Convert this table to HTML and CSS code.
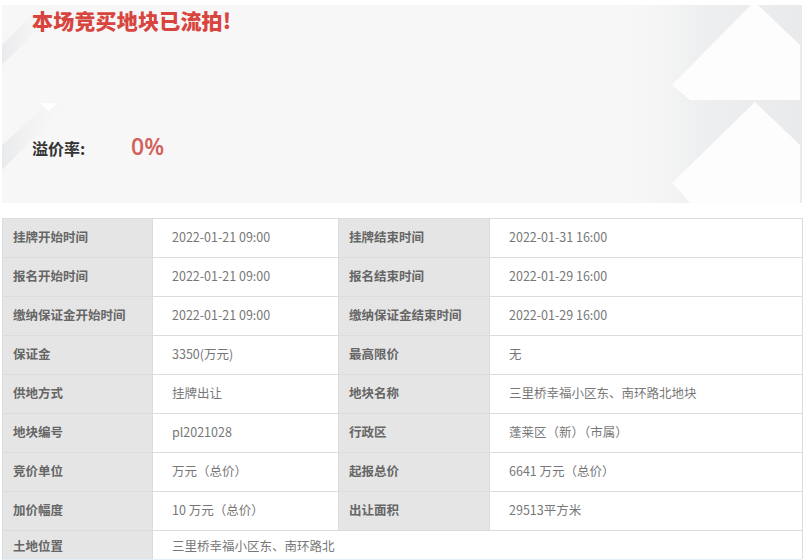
FILE: index.html
```html
<!DOCTYPE html>
<html lang="zh-CN">
<head>
<meta charset="utf-8">
<link rel="stylesheet" href="styles.css">
</head>
<body>
<div class="page">
  <section class="banner">
    <svg class="banner-bg" width="800" height="198" viewBox="0 0 800 198" aria-hidden="true">
      <defs>
        <linearGradient id="shade" x1="0" y1="0" x2="1" y2="0">
          <stop offset="0" stop-color="#f7f7f8" stop-opacity="0"/>
          <stop offset="0.45" stop-color="#eeeff0"/>
          <stop offset="1" stop-color="#e9eaec"/>
        </linearGradient>
        <linearGradient id="lshade" x1="0" y1="0" x2="1" y2="0">
          <stop offset="0" stop-color="#e9eaeb"/>
          <stop offset="1" stop-color="#f7f7f8" stop-opacity="0"/>
        </linearGradient>
      </defs>
      <rect x="610" y="0" width="190" height="198" fill="url(#shade)"/>
      <polygon points="0,40 40,0 60,0 0,60" fill="url(#lshade)"/>
      <polygon points="0,140 50,95 70,95 0,165" fill="url(#lshade)"/>
      <polygon points="38,98 56,98 47,106" fill="#ffffff"/>
      <polygon points="749,0 756,0 798,40 798,95 688,95 670,80" fill="#fdfdfd"/>
      <polygon points="753,97 798,140 798,198 688,198 670,178" fill="#fdfdfd"/>
    </svg>
    <h1 class="title">本场竞买地块已流拍!</h1>
    <div class="rate">
      <span class="rate-label">溢价率:</span>
      <span class="rate-value">0%</span>
    </div>
  </section>

  <table class="info">
    <colgroup>
      <col class="c1"><col class="c2"><col class="c3"><col class="c4">
    </colgroup>
    <tr><th>挂牌开始时间</th><td>2022-01-21 09:00</td><th>挂牌结束时间</th><td>2022-01-31 16:00</td></tr>
    <tr><th>报名开始时间</th><td>2022-01-21 09:00</td><th>报名结束时间</th><td>2022-01-29 16:00</td></tr>
    <tr><th>缴纳保证金开始时间</th><td>2022-01-21 09:00</td><th>缴纳保证金结束时间</th><td>2022-01-29 16:00</td></tr>
    <tr><th>保证金</th><td>3350(万元)</td><th>最高限价</th><td>无</td></tr>
    <tr><th>供地方式</th><td>挂牌出让</td><th>地块名称</th><td>三里桥幸福小区东、南环路北地块</td></tr>
    <tr><th>地块编号</th><td>pl2021028</td><th>行政区</th><td>蓬莱区（新）（市属）</td></tr>
    <tr><th>竞价单位</th><td>万元（总价）</td><th>起报总价</th><td>6641 万元（总价）</td></tr>
    <tr><th>加价幅度</th><td>10 万元（总价）</td><th>出让面积</th><td>29513平方米</td></tr>
    <tr><th>土地位置</th><td colspan="3">三里桥幸福小区东、南环路北</td></tr>
  </table>
  <div class="next-bar"></div>
</div>
</body>
</html>
```

FILE: styles.css
```css
* { box-sizing: border-box; }
html, body { margin: 0; padding: 0; background: #ffffff; }
body {
  font-family: "Noto Sans CJK SC", "Microsoft YaHei", "Noto Sans", sans-serif;
  overflow: hidden;
}
.page {
  padding: 5px 0 0 2px;
  width: 811px;
}
.banner {
  position: relative;
  width: 800px;
  height: 198px;
  background: #f7f7f8;
  overflow: hidden;
}
.banner-bg {
  position: absolute;
  left: 0;
  top: 0;
}
.title {
  position: relative;
  margin: 0;
  padding: 1px 0 0 30px;
  font-size: 21px;
  line-height: 28px;
  font-weight: 900;
  color: #d8443e;
  letter-spacing: 0.2px;
}
.rate {
  position: relative;
  display: flex;
  align-items: baseline;
  padding: 96px 0 0 30px;
}
.rate-label {
  width: 99px;
  font-size: 16px;
  font-weight: 700;
  color: #333333;
}
.rate-value {
  font-family: "Open Sans", "Noto Sans", sans-serif;
  font-size: 23px;
  font-weight: 600;
  color: #d2605b;
}
.info {
  margin-top: 15px;
  width: 800px;
  border-collapse: collapse;
  table-layout: fixed;
  font-size: 12.5px;
}
.info .c1 { width: 150px; }
.info .c2 { width: 186px; }
.info .c3 { width: 151px; }
.info .c4 { width: 313px; }
.info th, .info td {
  height: 39px;
  border: 1px solid #dcdcdc;
  padding: 0 0 3px 0;
  text-align: left;
  vertical-align: middle;
  white-space: nowrap;
}
.info th {
  background: #e5e5e5;
  color: #666666;
  font-weight: 700;
  padding-left: 10px;
}
.info td {
  background: #ffffff;
  color: #777777;
  font-weight: 400;
  padding-left: 19px;
}
.info tr:last-child th, .info tr:last-child td {
  height: 28px;
  vertical-align: top;
  padding-top: 5px;
  border-bottom: none;
}
.next-bar {
  height: 6px;
  width: 800px;
  background: #e4eef6;
}
```
